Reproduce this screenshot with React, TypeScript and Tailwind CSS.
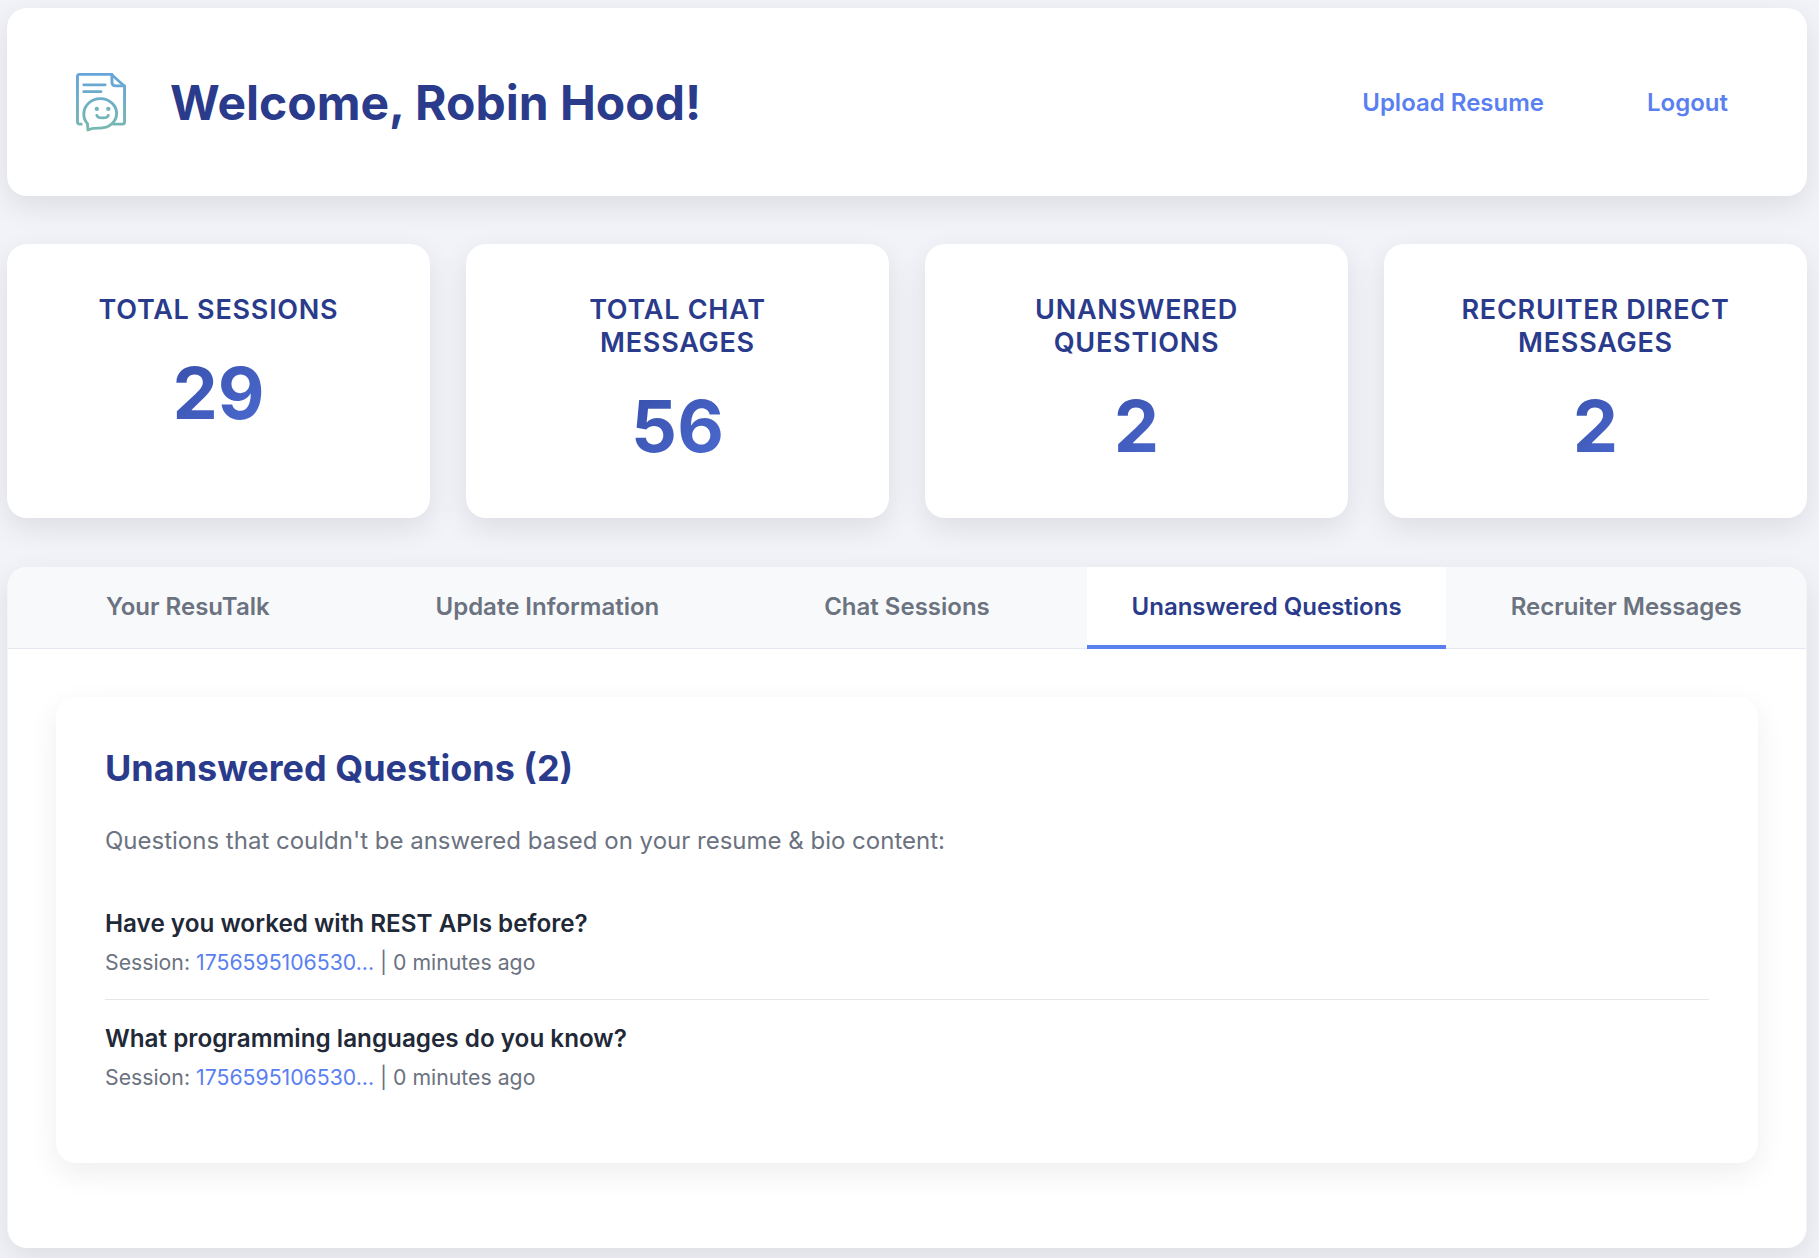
import React from "react";

function Logo() {
  return (
    <svg viewBox="0 0 48 60" preserveAspectRatio="none" className="w-[50px] h-[59px] shrink-0 mt-[1px]" fill="none" strokeWidth="2.8" strokeLinecap="round" strokeLinejoin="round">
      <defs>
        <linearGradient id="lg" gradientUnits="userSpaceOnUse" x1="24" y1="0" x2="24" y2="60">
          <stop offset="0" stopColor="#66a4dc" />
          <stop offset="1" stopColor="#78b9ae" />
        </linearGradient>
      </defs>
      <g stroke="url(#lg)">
        <path d="M5 52H3.5C2 52 1.4 51 1.4 49.5V3.5C1.4 2 2 1.4 3.5 1.4H34L46.6 13.5V49.5C46.6 51 46 52 44.5 52H36" />
        <path d="M34.5 1.5V9.5C34.5 12 36 13.2 38 13.2H46.5" />
        <path d="M7.5 12H28" />
        <path d="M7.5 19H24" />
        <path d="M11.5 58L11 51.5C8.8 49 7.5 45.5 7.5 42C7.5 33 14.5 26 23.5 26C32 26 39 33 39 41C39 49.5 32 56 23.5 56C20.5 56 17.5 55.8 15.5 56.5Z" />
        <path d="M20 43C21 46.5 30 46.5 31 43" />
      </g>
      <circle cx="20" cy="36.5" r="2.1" fill="#76b4bb" />
      <circle cx="31" cy="36.5" r="2.1" fill="#76b4bb" />
    </svg>
  );
}

function Stat({ label, value }: { label: React.ReactNode; value: string }) {
  return (
    <div className="bg-white rounded-[20px] shadow-[0_10px_30px_rgba(0,0,0,0.09)] px-[35px] pt-[49px] h-[274px] flex flex-col items-center text-center">
      <div className="text-[#2a3b8c] text-[27px] leading-[33px] font-semibold tracking-[0.75px]">{label}</div>
      <div className="w-full bg-[linear-gradient(135deg,#2a3b8c,#5a7ff0)] bg-clip-text text-transparent text-[72px] leading-[90px] font-bold mt-[22px]">{value}</div>
    </div>
  );
}

function Meta() {
  return (
    <div className="text-[21.25px] leading-[34px] text-[#6b7280] mt-[2px]">
      Session: <span className="text-[#5a7ff0]">1756595106530...</span> | 0 minutes ago
    </div>
  );
}

export default function App() {
  const tabs = ["Your ResuTalk", "Update Information", "Chat Sessions", "Unanswered Questions", "Recruiter Messages"];
  return (
    <div className="min-h-[1258px] bg-[#f1f3f8] pl-[7px] pr-[12px] pt-[8px] pb-[10px] font-['Inter',sans-serif] flex flex-col">
      <header className="bg-white rounded-[20px] shadow-[0_10px_30px_rgba(0,0,0,0.09)] h-[188px] flex items-center justify-between pl-[69px] pr-[79px]">
        <div className="flex items-center gap-[44px]">
          <Logo />
          <h1 className="text-[#2a3b8c] text-[48px] font-bold leading-[56px] pt-[2px]">Welcome, Robin Hood!</h1>
        </div>
        <nav className="flex items-center gap-[103px] text-[#5a7ff0] text-[24px] font-semibold pt-[2px]">
          <span>Upload Resume</span>
          <span>Logout</span>
        </nav>
      </header>

      <section className="grid grid-cols-4 gap-[36px] mt-[48px]">
        <Stat label="TOTAL SESSIONS" value="29" />
        <Stat label={<>TOTAL CHAT<br />MESSAGES</>} value="56" />
        <Stat label={<>UNANSWERED<br />QUESTIONS</>} value="2" />
        <Stat label={<>RECRUITER DIRECT<br />MESSAGES</>} value="2" />
      </section>

      <section className="bg-white rounded-[20px] shadow-[0_10px_30px_rgba(0,0,0,0.09)] mt-[49px] overflow-hidden h-[681px] border-x border-[#f4f5f8]">
        <div className="grid grid-cols-5 h-[82px] bg-[#f8f9fb] border-b border-[#e5e8f0]">
          {tabs.map((t) => {
            const active = t === "Unanswered Questions";
            return (
              <div
                key={t}
                className={
                  active
                    ? "flex items-center justify-center bg-white text-[#2a3b8c] text-[24px] font-semibold border-b-[4px] border-[#5a7ff0] pt-[2px] h-[82px]"
                    : "flex items-center justify-center text-[#6b7280] text-[24px] font-semibold pb-[2px] h-[82px]"
                }
              >
                {t}
              </div>
            );
          })}
        </div>
        <div className="px-[48px] pt-[48px]">
          <div className="bg-white rounded-[20px] shadow-[0_10px_30px_rgba(0,0,0,0.07)] h-[466px] px-[49px] pt-[49px]">
            <h2 className="text-[#2a3b8c] text-[36px] leading-[44px] font-bold">Unanswered Questions (2)</h2>
            <p className="text-[#6b7280] text-[24px] leading-[36px] mt-[33px]">
              Questions that couldn't be answered based on your resume &amp; bio content:
            </p>
            <div className="mt-[46px] pb-[20px] border-b border-[#e5e7eb]">
              <div className="text-[#1f2937] text-[24.25px] leading-[38px] font-semibold">Have you worked with REST APIs before?</div>
              <Meta />
            </div>
            <div className="mt-[20px]">
              <div className="text-[#1f2937] text-[24.25px] leading-[38px] font-semibold">What programming languages do you know?</div>
              <Meta />
            </div>
          </div>
        </div>
      </section>
    </div>
  );
}
